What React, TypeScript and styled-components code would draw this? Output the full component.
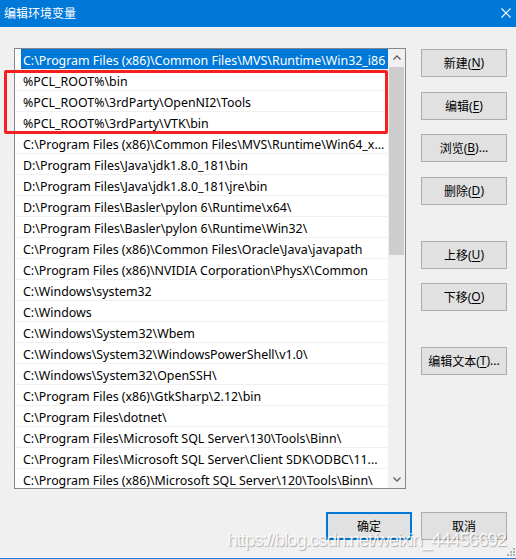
import React from "react";
import styled, { createGlobalStyle } from "styled-components";

const GlobalStyle = createGlobalStyle`
  html, body {
    margin: 0;
    padding: 0;
    background: #f0f0f0;
  }
  * {
    box-sizing: border-box;
  }
`;

const uiFont = `"Noto Sans", "Noto Sans CJK SC", sans-serif`;

const Window = styled.div`
  position: relative;
  width: 516px;
  height: 559px;
  background: #f0f0f0;
  border-bottom: 1px solid #1883d7;
  display: flex;
  flex-direction: column;
  font-family: ${uiFont};
  overflow: hidden;
`;

const TitleBar = styled.div`
  height: 27px;
  flex: none;
  background: #0078d7;
  display: flex;
  align-items: center;
  justify-content: space-between;
  padding: 0 5px 0 4px;
`;

const Title = styled.span`
  color: #fff;
  font-size: 12px;
  font-family: "Noto Sans CJK SC", sans-serif;
  line-height: 1;
  padding-bottom: 2px;
`;

const CloseIcon = styled.svg`
  width: 10px;
  height: 10px;
  margin-bottom: 2px;
`;

const Body = styled.div`
  flex: 1;
  display: flex;
  flex-direction: column;
  padding: 21px 9px 0 14px;
`;

const Main = styled.div`
  display: flex;
  gap: 15px;
`;

const ListBox = styled.div`
  width: 392px;
  height: 441px;
  border: 1px solid #828790;
  background: #fff;
  display: flex;
`;

const List = styled.div`
  flex: 1;
  overflow: hidden;
`;

const Row = styled.div`
  height: 21px;
  border-bottom: 1px solid #f0f0f0;
  display: flex;
`;

const Label = styled.div<{ $selected?: boolean }>`
  flex: 1;
  min-width: 0;
  height: 20px;
  margin-left: 6px;
  padding-left: 2px;
  background: ${(p) => (p.$selected ? "#0078d7" : "transparent")};
  color: ${(p) => (p.$selected ? "#fff" : "#000")};
  font-size: 12.4px;
  line-height: 24px;
  white-space: nowrap;
  overflow: hidden;
  text-overflow: ellipsis;
`;

const ScrollBar = styled.div`
  width: 17px;
  flex: none;
  background: #f0f0f0;
  display: flex;
  flex-direction: column;
`;

const ArrowBox = styled.div`
  height: 17px;
  flex: none;
  display: flex;
  align-items: center;
  justify-content: center;
`;

const Track = styled.div`
  flex: 1;
  padding: 1px 1px 0;
`;

const Thumb = styled.div`
  height: 188px;
  background: #cdcdcd;
`;

const Buttons = styled.div`
  width: 86px;
  display: flex;
  flex-direction: column;
  padding-top: 1px;
`;

const Button = styled.div<{ $gap?: number; $default?: boolean }>`
  width: 86px;
  height: 28px;
  margin-top: ${(p) => p.$gap ?? 0}px;
  background: #e1e1e1;
  border: ${(p) => (p.$default ? "2px solid #0078d7" : "1px solid #adadad")};
  display: flex;
  align-items: center;
  justify-content: center;
  font-size: 12px;
  color: #000;
  padding-bottom: 1px;
  u {
    text-decoration: underline;
    text-underline-offset: 2px;
  }
`;

const Footer = styled.div`
  display: flex;
  justify-content: flex-end;
  gap: 9px;
  padding-top: 23px;
`;

const Highlight = styled.div`
  position: absolute;
  left: 4px;
  top: 70px;
  width: 384px;
  height: 64px;
  border: 3px solid #f41f1f;
  border-radius: 2px;
  pointer-events: none;
`;

const Watermark = styled.div`
  position: absolute;
  right: 10px;
  top: 530px;
  font-family: "Liberation Sans", Arial, sans-serif;
  font-size: 19px;
  letter-spacing: -1.2px;
  line-height: 20px;
  color: rgba(255, 255, 255, 0.85);
  text-shadow: 1px 1px 1px rgba(0, 0, 0, 0.28);
  white-space: nowrap;
  pointer-events: none;
`;

const Grip = styled.svg`
  position: absolute;
  right: 1px;
  bottom: 2px;
  width: 8px;
  height: 8px;
`;

const paths = [
  "C:\\Program Files (x86)\\Common Files\\MVS\\Runtime\\Win32_i86",
  "%PCL_ROOT%\\bin",
  "%PCL_ROOT%\\3rdParty\\OpenNI2\\Tools",
  "%PCL_ROOT%\\3rdParty\\VTK\\bin",
  "C:\\Program Files (x86)\\Common Files\\MVS\\Runtime\\Win64_x...",
  "D:\\Program Files\\Java\\jdk1.8.0_181\\bin",
  "D:\\Program Files\\Java\\jdk1.8.0_181\\jre\\bin",
  "D:\\Program Files\\Basler\\pylon 6\\Runtime\\x64\\",
  "D:\\Program Files\\Basler\\pylon 6\\Runtime\\Win32\\",
  "C:\\Program Files (x86)\\Common Files\\Oracle\\Java\\javapath",
  "C:\\Program Files (x86)\\NVIDIA Corporation\\PhysX\\Common",
  "C:\\Windows\\system32",
  "C:\\Windows",
  "C:\\Windows\\System32\\Wbem",
  "C:\\Windows\\System32\\WindowsPowerShell\\v1.0\\",
  "C:\\Windows\\System32\\OpenSSH\\",
  "C:\\Program Files (x86)\\GtkSharp\\2.12\\bin",
  "C:\\Program Files\\dotnet\\",
  "C:\\Program Files\\Microsoft SQL Server\\130\\Tools\\Binn\\",
  "C:\\Program Files\\Microsoft SQL Server\\Client SDK\\ODBC\\11...",
  "C:\\Program Files (x86)\\Microsoft SQL Server\\120\\Tools\\Binn\\",
];

const Chevron = ({ up }: { up?: boolean }) => (
  <svg width="8" height="5" viewBox="0 0 8 5">
    <path
      d={up ? "M0.5 4.5 L4 1 L7.5 4.5" : "M0.5 0.5 L4 4 L7.5 0.5"}
      fill="none"
      stroke="#606060"
      strokeWidth="1.3"
    />
  </svg>
);

const App: React.FC = () => {
  return (
    <Window>
      <GlobalStyle />
      <TitleBar>
        <Title>编辑环境变量</Title>
        <CloseIcon viewBox="0 0 10 10">
          <path d="M0.5 0.5 L9.5 9.5 M9.5 0.5 L0.5 9.5" stroke="#fff" strokeWidth="1.1" />
        </CloseIcon>
      </TitleBar>
      <Body>
        <Main>
          <ListBox>
            <List>
              {paths.map((p, i) => (
                <Row key={i}>
                  <Label $selected={i === 0}>{p}</Label>
                </Row>
              ))}
            </List>
            <ScrollBar>
              <ArrowBox>
                <Chevron up />
              </ArrowBox>
              <Track>
                <Thumb />
              </Track>
              <ArrowBox>
                <Chevron />
              </ArrowBox>
            </ScrollBar>
          </ListBox>
          <Buttons>
            <Button>
              新建(<u>N</u>)
            </Button>
            <Button $gap={15}>
              编辑(<u>E</u>)
            </Button>
            <Button $gap={14}>
              浏览(<u>B</u>)...
            </Button>
            <Button $gap={15}>
              删除(<u>D</u>)
            </Button>
            <Button $gap={36}>
              上移(<u>U</u>)
            </Button>
            <Button $gap={14}>
              下移(<u>O</u>)
            </Button>
            <Button $gap={36}>
              编辑文本(<u>T</u>)...
            </Button>
          </Buttons>
        </Main>
        <Footer>
          <Button $default>确定</Button>
          <Button>取消</Button>
        </Footer>
      </Body>
      <Highlight />
      <Watermark>https://blog.csdn.net/weixin_44456692</Watermark>
      <Grip viewBox="0 0 8 8">
        <rect x="6" y="0" width="2" height="2" fill="#b0b0b0" />
        <rect x="3" y="3" width="2" height="2" fill="#b0b0b0" />
        <rect x="6" y="3" width="2" height="2" fill="#b0b0b0" />
        <rect x="0" y="6" width="2" height="2" fill="#b0b0b0" />
        <rect x="3" y="6" width="2" height="2" fill="#b0b0b0" />
        <rect x="6" y="6" width="2" height="2" fill="#b0b0b0" />
      </Grip>
    </Window>
  );
};

export default App;
